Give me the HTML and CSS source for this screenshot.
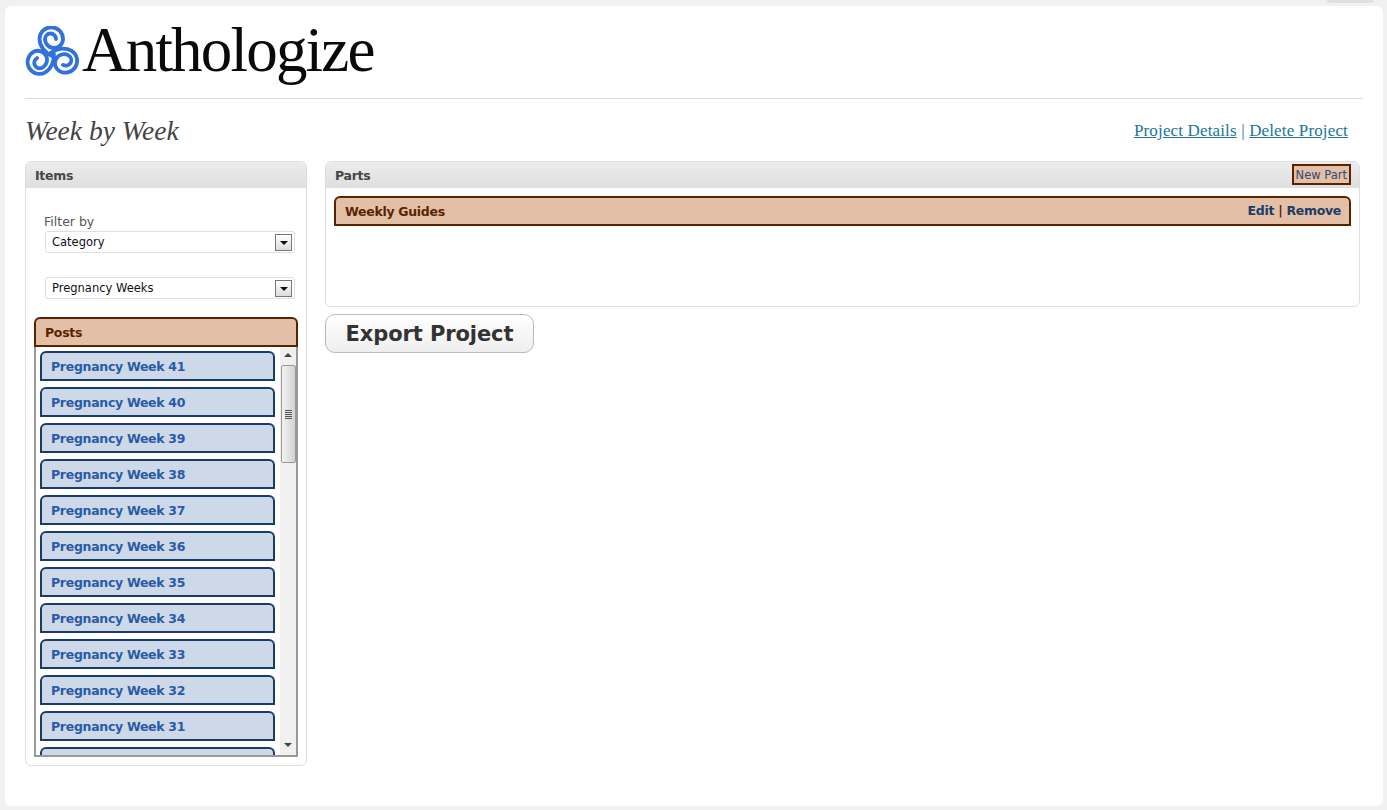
FILE: index.html
```html
<!DOCTYPE html>
<html lang="en">
<head>
<meta charset="utf-8">
<title>Anthologize</title>
<link rel="stylesheet" href="styles.css">
</head>
<body>
<div class="screen-tab"></div>
<div class="page">
  <header class="masthead">
    <svg class="triskele" viewBox="0 0 54 50" width="54" height="50" aria-hidden="true">
      <g class="triskele-arms">
        <path id="arm" d="M27 30C20 27 14.5 20 14.5 13A11.7 11.7 0 0 1 38 13A9 9 0 0 1 20 13A5.5 5.5 0 0 1 31 13"/>
        <use href="#arm" transform="rotate(120 27 28)"/>
        <use href="#arm" transform="rotate(240 27 28)"/>
      </g>
    </svg>
    <span class="wordmark">Anthologize</span>
  </header>
  <div class="title-row">
    <h1 class="project-title">Week by Week</h1>
    <div class="project-links"><a href="#">Project Details</a> | <a href="#">Delete Project</a></div>
  </div>
  <div class="columns">
    <section class="panel panel-items">
      <h2 class="panel-head">Items</h2>
      <div class="filters">
        <label class="filter-label">Filter by</label>
        <div class="fake-select"><span>Category</span><i class="select-btn"></i></div>
        <div class="fake-select second"><span>Pregnancy Weeks</span><i class="select-btn"></i></div>
      </div>
      <div class="posts">
        <div class="bar posts-head">Posts</div>
        <div class="posts-body">
          <ul class="post-list">
            <li>Pregnancy Week 41</li>
            <li>Pregnancy Week 40</li>
            <li>Pregnancy Week 39</li>
            <li>Pregnancy Week 38</li>
            <li>Pregnancy Week 37</li>
            <li>Pregnancy Week 36</li>
            <li>Pregnancy Week 35</li>
            <li>Pregnancy Week 34</li>
            <li>Pregnancy Week 33</li>
            <li>Pregnancy Week 32</li>
            <li>Pregnancy Week 31</li>
            <li></li>
          </ul>
          <div class="scrollbar">
            <i class="arrow up"></i>
            <div class="thumb"><i class="grip"></i></div>
            <i class="track"></i>
            <i class="arrow down"></i>
          </div>
        </div>
      </div>
    </section>
    <div class="main-col">
      <section class="panel panel-parts">
        <h2 class="panel-head">Parts <a class="new-part" href="#">New Part</a></h2>
        <div class="parts-body">
          <div class="bar part">
            <span>Weekly Guides</span>
            <span class="part-actions"><a href="#">Edit</a> | <a href="#">Remove</a></span>
          </div>
        </div>
      </section>
      <a class="export" href="#">Export Project</a>
    </div>
  </div>
</div>
</body>
</html>
```
FILE: styles.css
```css
* { box-sizing: border-box; }
html, body { margin: 0; height: 810px; overflow: hidden; }
body {
  background: #f1f1f1;
  padding: 6px 4px 4px 5px;
  font-family: "DejaVu Sans", Verdana, sans-serif;
  color: #333;
}
.screen-tab {
  position: absolute;
  top: 0;
  left: 1327px;
  width: 47px;
  height: 3px;
  background: #e0e0e0;
  border-radius: 0 0 3px 3px;
}
.page {
  height: 800px;
  background: #fff;
  border-radius: 6px;
  padding: 0 20px;
}
.masthead {
  height: 93px;
  border-bottom: 1px solid #dcdcdc;
  display: flex;
  align-items: flex-start;
  padding-top: 20px;
  gap: 3px;
}
.triskele { flex: none; }
.triskele-arms { fill: none; stroke: #3272dc; stroke-width: 3.8; stroke-linecap: round; }
.wordmark {
  margin-top: -6px;
  font-family: "Liberation Serif", "Times New Roman", serif;
  font-size: 63px;
  line-height: 60px;
  letter-spacing: -1.8px;
  color: #0a0a0a;
}
.title-row {
  display: flex;
  justify-content: space-between;
  align-items: center;
  height: 62px;
  padding: 2px 15px 0 0;
}
.project-title {
  margin: 0;
  font-family: "Liberation Serif", "Times New Roman", serif;
  font-style: italic;
  font-weight: 400;
  font-size: 27.5px;
  line-height: 28px;
  color: #444;
}
.project-links {
  font-family: "Liberation Serif", "Times New Roman", serif;
  font-size: 17px;
  line-height: 20px;
  letter-spacing: 0.15px;
  color: #21759b;
}
.project-links a { color: #21759b; }
.columns { display: flex; gap: 18px; align-items: flex-start; }
.panel {
  border: 1px solid #dfdfdf;
  border-radius: 6px;
  background: #fff;
  overflow: hidden;
}
.panel-head {
  position: relative;
  margin: 0;
  height: 26px;
  padding: 0 9px;
  background: linear-gradient(#ececec, #dfdfdf);
  font-size: 12.5px;
  font-weight: 700;
  line-height: 28px;
  color: #464646;
  letter-spacing: -0.3px;
}
.panel-items { width: 282px; height: 605px; flex: none; }
.filters { padding: 26px 11px 0 19px; }
.filter-label { display: block; margin-left: -1px; font-size: 12.5px; line-height: 16px; color: #555; }
.fake-select {
  display: flex;
  align-items: center;
  justify-content: space-between;
  height: 22px;
  margin: 1px 0 0 0;
  padding: 0 2px 0 6px;
  border: 1px solid #dfdfdf;
  border-radius: 3px;
  font-size: 11.5px;
  color: #111;
}
.fake-select.second { margin-top: 24px; }
.select-btn {
  position: relative;
  width: 17px;
  height: 17px;
  border: 1px solid #777;
  background: linear-gradient(#fff, #ddd);
}
.select-btn::after {
  content: "";
  position: absolute;
  left: 4px;
  top: 6px;
  border: 4px solid transparent;
  border-top-color: #111;
  border-bottom: 0;
}
.posts { padding: 18px 8px 0; }
.bar {
  border: 2px solid #5a2300;
  border-radius: 6px 6px 0 0;
  background: #e3bfa8;
  color: #5a2300;
  font-size: 12.5px;
  font-weight: 700;
  letter-spacing: -0.3px;
}
.posts-head { height: 30px; line-height: 27px; padding: 0 9px; }
.posts-body {
  display: flex;
  height: 410px;
  border: 2px solid #999;
  border-top: 0;
}
.post-list {
  flex: 1;
  min-width: 0;
  margin: 0;
  padding: 4px 5px 0 4px;
  list-style: none;
  overflow: hidden;
}
.post-list li {
  height: 30px;
  margin-bottom: 6px;
  padding-left: 9px;
  border: 2px solid #1a3d66;
  border-radius: 6px 6px 0 0;
  background: #cdd9e8;
  color: #2a5aa5;
  font-size: 12.5px;
  font-weight: 700;
  line-height: 27px;
  letter-spacing: -0.3px;
}
.scrollbar {
  flex: none;
  width: 16px;
  display: flex;
  flex-direction: column;
  background: #f0f0f0;
}
.arrow { flex: none; height: 18px; position: relative; }
.arrow::after {
  content: "";
  position: absolute;
  left: 4px;
  top: 6px;
  border: 4px solid transparent;
  border-top: 0;
  border-bottom-color: #444;
}
.arrow.down::after { border-bottom: 0; border-top: 4px solid #444; }
.thumb {
  flex: none;
  width: 15px;
  height: 98px;
  margin-left: 1px;
  border: 1px solid #999;
  border-radius: 2px;
  background: linear-gradient(90deg, #f2f2f2, #d2d2d2);
  display: flex;
  align-items: center;
  justify-content: center;
}
.grip {
  width: 7px;
  height: 9px;
  background: repeating-linear-gradient(#555 0 1px, #ddd 1px 2px);
}
.track { flex: 1; }
.main-col { width: 1035px; flex: none; }
.panel-parts { height: 146px; }
.new-part {
  position: absolute;
  top: 2px;
  right: 8px;
  height: 21px;
  padding: 0 2px;
  border: 2px solid #5a2300;
  background: #e3bfa8;
  color: #2f4a75;
  font-size: 11.5px;
  font-weight: 400;
  line-height: 18px;
  letter-spacing: 0;
  text-decoration: none;
}
.parts-body { padding: 8px 8px 0; }
.part {
  display: flex;
  justify-content: space-between;
  height: 30px;
  padding: 0 8px 0 9px;
  line-height: 27px;
}
.part-actions { color: #5a2300; line-height: 25px; }
.part-actions a { color: #1a3d66; text-decoration: none; }
.export {
  display: block;
  width: 209px;
  height: 39px;
  margin-top: 7px;
  border: 1px solid #bbb;
  border-radius: 10px;
  background: linear-gradient(#fff, #eee);
  color: #333;
  font-size: 21px;
  font-weight: 700;
  line-height: 39px;
  text-align: center;
  text-decoration: none;
  letter-spacing: -0.1px;
}
```
